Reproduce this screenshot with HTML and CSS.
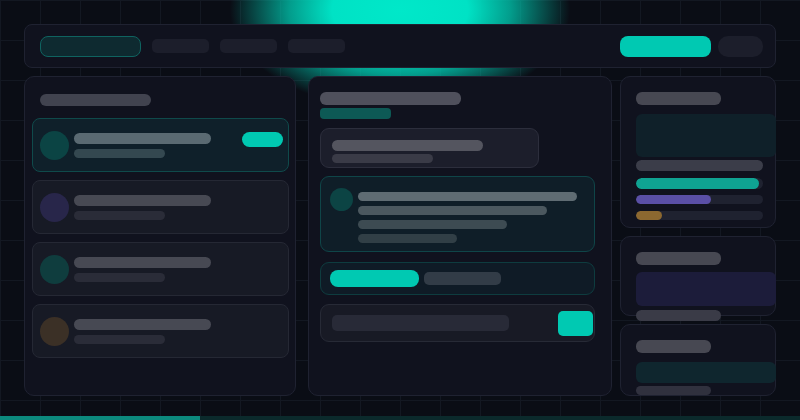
FILE: index.html
```html
<!DOCTYPE html>
<html lang="en">
<head>
<meta charset="utf-8">
<title>Dashboard skeleton</title>
<link rel="stylesheet" href="styles.css">
</head>
<body>
<div class="app">
  <header class="topbar">
    <div class="logo"></div>
    <nav class="nav">
      <span class="nav-pill"></span>
      <span class="nav-pill"></span>
      <span class="nav-pill"></span>
    </nav>
    <div class="actions">
      <span class="btn-primary"></span>
      <span class="btn-ghost"></span>
    </div>
  </header>

  <main class="main">
    <section class="panel list-panel">
      <div class="panel-title"></div>
      <div class="item-list">
        <div class="item item-active">
          <span class="avatar av-teal"></span>
          <div class="lines">
            <span class="l1"></span>
            <span class="l2"></span>
          </div>
          <span class="badge"></span>
        </div>
        <div class="item">
          <span class="avatar av-purple"></span>
          <div class="lines">
            <span class="l1"></span>
            <span class="l2"></span>
          </div>
        </div>
        <div class="item">
          <span class="avatar av-green"></span>
          <div class="lines">
            <span class="l1"></span>
            <span class="l2"></span>
          </div>
        </div>
        <div class="item">
          <span class="avatar av-brown"></span>
          <div class="lines">
            <span class="l1"></span>
            <span class="l2"></span>
          </div>
        </div>
      </div>
    </section>

    <section class="panel detail-panel">
      <div class="d-title"></div>
      <div class="d-sub"></div>
      <div class="card-a">
        <span class="a1"></span>
        <span class="a2"></span>
      </div>
      <div class="card-b">
        <span class="b-avatar"></span>
        <div class="b-lines">
          <span class="b1"></span>
          <span class="b2"></span>
          <span class="b3"></span>
          <span class="b4"></span>
        </div>
      </div>
      <div class="card-c">
        <span class="c-primary"></span>
        <span class="c-ghost"></span>
      </div>
      <div class="card-d">
        <span class="d-input"></span>
        <span class="d-send"></span>
      </div>
    </section>

    <aside class="side">
      <div class="side-card s1">
        <div class="s-title"></div>
        <div class="s-block blk-teal"></div>
        <div class="s-bar"></div>
        <div class="track t1"><div class="fill f-teal" style="width:123px"></div></div>
        <div class="track t2"><div class="fill f-purple" style="width:75px"></div></div>
        <div class="track t3"><div class="fill f-amber" style="width:26px"></div></div>
      </div>
      <div class="side-card s2">
        <div class="s-title"></div>
        <div class="s-block blk-indigo"></div>
        <div class="s-line"></div>
      </div>
      <div class="side-card s3">
        <div class="s-title short"></div>
        <div class="s-block blk-dteal"></div>
        <div class="s-line short thin"></div>
      </div>
    </aside>
  </main>
</div>
<div class="progress"><div class="progress-fill" style="width:200px"></div></div>
</body>
</html>
```

FILE: styles.css
```css
* { box-sizing: border-box; }

body {
  margin: 0;
  width: 800px;
  height: 420px;
  overflow: hidden;
  font-family: "Inter", "Liberation Sans", sans-serif;
  background-color: #0a0d15;
  background-image:
    radial-gradient(ellipse 170px 100px at 400px 10px, #00e8c9 0%, #00e2c5 40%, rgba(0, 205, 180, 0.75) 65%, rgba(0, 150, 140, 0) 100%),
    linear-gradient(to right, #131822 1px, transparent 1px),
    linear-gradient(to bottom, #131822 1px, transparent 1px);
  background-size: 100% 100%, 40px 40px, 40px 40px;
  background-repeat: no-repeat, repeat, repeat;
}

.app {
  display: flex;
  flex-direction: column;
  gap: 8px;
  padding: 24px 24px 0;
}

/* ---------- top bar ---------- */
.topbar {
  display: flex;
  align-items: center;
  height: 44px;
  padding: 0 12px 0 15px;
  background: #10121e;
  border: 1px solid #1f2231;
  border-radius: 8px;
}
.logo {
  width: 101px;
  height: 21px;
  background: #0e2a30;
  border: 1px solid #0f6360;
  border-radius: 8px;
}
.nav {
  display: flex;
  gap: 11px;
  margin-left: 11px;
}
.nav-pill {
  width: 57px;
  height: 14px;
  background: #1c1e2b;
  border-radius: 5px;
}
.actions {
  display: flex;
  gap: 7px;
  margin-left: auto;
}
.btn-primary {
  width: 91px;
  height: 21px;
  background: #00c9b2;
  border-radius: 8px;
}
.btn-ghost {
  width: 45px;
  height: 21px;
  background: #1c1e2b;
  border-radius: 10px;
}

/* ---------- main ---------- */
.main {
  display: flex;
  gap: 8px;
}
.panel {
  height: 320px;
  background: #10121e;
  border: 1px solid #1f2231;
  border-radius: 10px;
}

/* list panel */
.list-panel {
  width: 272px;
  margin-right: 4px;
  padding: 17px 6px 0 7px;
}
.panel-title {
  width: 111px;
  height: 12px;
  margin-left: 8px;
  background: #41434f;
  border-radius: 6px;
}
.item-list {
  display: flex;
  flex-direction: column;
  gap: 8px;
  margin-top: 12px;
}
.item {
  display: flex;
  align-items: center;
  height: 54px;
  padding: 0 5px 0 7px;
  background: #171a25;
  border: 1px solid #252834;
  border-radius: 8px;
}
.item-active {
  background: #0f202a;
  border-color: #0f4a4b;
}
.avatar {
  width: 29px;
  height: 29px;
  margin-right: 5px;
  border-radius: 50%;
  flex: none;
}
.av-teal { background: #0b4444; }
.av-purple { background: #28264a; }
.av-green { background: #0f3d3e; }
.av-brown { background: #3b3026; }
.lines {
  display: flex;
  flex-direction: column;
  gap: 5px;
}
.l1 {
  display: block;
  width: 137px;
  height: 11px;
  background: #474953;
  border-radius: 6px;
}
.l2 {
  display: block;
  width: 91px;
  height: 9px;
  background: #2a2c38;
  border-radius: 5px;
}
.item-active .l1 { background: #5a6a72; }
.item-active .l2 { background: #344850; }
.badge {
  align-self: flex-start;
  margin-top: 13px;
  margin-left: auto;
  width: 41px;
  height: 15px;
  background: #00c9b2;
  border-radius: 8px;
}

/* detail panel */
.detail-panel {
  width: 304px;
  padding: 15px 11px 0 11px;
}
.d-title {
  width: 141px;
  height: 13px;
  background: #4f505c;
  border-radius: 6px;
}
.d-sub {
  width: 71px;
  height: 11px;
  margin-top: 3px;
  background: #0d5955;
  border-radius: 4px;
}
.card-a {
  width: 219px;
  height: 40px;
  margin-top: 9px;
  padding: 11px 11px 0;
  background: #1c1e2b;
  border: 1px solid #2c2e3c;
  border-radius: 9px;
}
.a1 {
  display: block;
  width: 151px;
  height: 11px;
  background: #54555f;
  border-radius: 6px;
}
.a2 {
  display: block;
  width: 101px;
  height: 9px;
  margin-top: 3px;
  background: #3a3b47;
  border-radius: 5px;
}
.card-b {
  display: flex;
  align-items: flex-start;
  width: 275px;
  height: 76px;
  margin-top: 8px;
  padding: 11px 9px;
  background: #0f1e28;
  border: 1px solid #0f4548;
  border-radius: 9px;
}
.b-avatar {
  width: 23px;
  height: 23px;
  margin-right: 5px;
  background: #0c4444;
  border-radius: 50%;
  flex: none;
}
.b-lines {
  display: flex;
  flex-direction: column;
  gap: 5px;
  margin-top: 4px;
}
.b-lines span {
  display: block;
  height: 9px;
  border-radius: 5px;
}
.b1 { width: 219px; background: #5f6c73; }
.b2 { width: 189px; background: #4b585f; }
.b3 { width: 149px; background: #3d4b52; }
.b4 { width: 99px; background: #313f46; }

.card-c {
  display: flex;
  align-items: center;
  gap: 5px;
  width: 275px;
  height: 33px;
  margin-top: 10px;
  padding: 0 9px;
  background: #0f1b26;
  border: 1px solid #0e3c3f;
  border-radius: 9px;
}
.c-primary {
  width: 89px;
  height: 17px;
  background: #00c9b2;
  border-radius: 8px;
}
.c-ghost {
  width: 77px;
  height: 13px;
  background: #323c47;
  border-radius: 5px;
}
.card-d {
  display: flex;
  align-items: center;
  justify-content: space-between;
  width: 275px;
  height: 38px;
  margin-top: 9px;
  padding: 0 1px 0 11px;
  background: #181a25;
  border: 1px solid #272a36;
  border-radius: 9px;
}
.d-input {
  width: 177px;
  height: 16px;
  background: #282a37;
  border-radius: 5px;
}
.d-send {
  width: 35px;
  height: 25px;
  background: #00c9b2;
  border-radius: 5px;
}

/* side column */
.side {
  display: flex;
  flex-direction: column;
  gap: 8px;
  width: 156px;
}
.side-card {
  padding: 15px 0 0 15px;
  background: #10121e;
  border: 1px solid #1f2231;
  border-radius: 10px;
}
.s1 { height: 152px; }
.s2 { height: 80px; }
.s3 { height: 72px; }
.s-title {
  width: 85px;
  height: 13px;
  background: #474852;
  border-radius: 6px;
}
.s-title.short { width: 75px; }
.s-block {
  width: 140px;
  border-radius: 6px;
}
.blk-teal { height: 43px; margin-top: 9px; background: #0f2029; }
.blk-indigo { height: 34px; margin-top: 7px; background: #1c1c3a; }
.blk-dteal { height: 21px; margin-top: 9px; background: #0f262e; }
.s-bar {
  width: 127px;
  height: 11px;
  margin-top: 3px;
  background: #3b3d49;
  border-radius: 6px;
}
.track {
  width: 127px;
  background: #1f2230;
  border-radius: 6px;
  overflow: hidden;
}
.t1 { height: 11px; margin-top: 7px; }
.t2 { height: 9px; margin-top: 6px; }
.t3 { height: 9px; margin-top: 7px; }
.fill {
  height: 100%;
  border-radius: 6px;
}
.f-teal { background: #0fa392; }
.f-purple { background: #5a4fa6; }
.f-amber { background: #8c6830; }
.s-line {
  width: 85px;
  height: 11px;
  margin-top: 4px;
  background: #3a3b47;
  border-radius: 6px;
}
.s-line.short { width: 75px; }
.s-line.thin { height: 9px; margin-top: 3px; background: #30313e; }

/* bottom progress */
.progress {
  height: 4px;
  margin-top: 20px;
  background: #0b2a2c;
}
.progress-fill {
  height: 100%;
  background: #0c8a7e;
}
```
